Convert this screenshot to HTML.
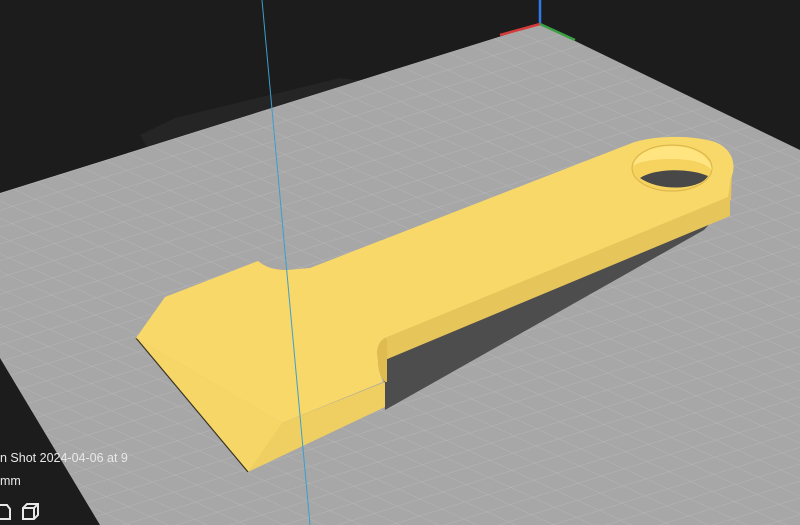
<!DOCTYPE html>
<html><head><meta charset="utf-8"><style>
html,body{margin:0;padding:0;background:#1c1c1c;width:800px;height:525px;overflow:hidden}
svg{display:block}
.t{font-family:"Liberation Sans",sans-serif;fill:#e8e8e8;font-size:12.5px}
</style></head><body>
<svg width="800" height="525" viewBox="0 0 800 525" xmlns="http://www.w3.org/2000/svg">
<defs>
<pattern id="g" patternUnits="userSpaceOnUse" width="24" height="24" patternTransform="matrix(0.909,0.416,-0.954,0.299,540,24)">
<rect width="24" height="24" fill="#a7a7a7"/>
<path d="M0 0H24M0 0V24" stroke="#bbbbbb" stroke-width="1.1" fill="none"/>
</pattern>
</defs>
<rect width="800" height="525" fill="#1c1c1c"/>
<polygon points="140,135 175,118 340,78 372,82 372,92 150,152" fill="#252525"/>
<polygon points="540,24 800,150 800,525 100,525 0,358 0,193" fill="url(#g)"/>
<!-- shadow -->
<polygon points="383,355 385,410 704,230 726,206" fill="#4d4d4d"/>
<!-- handle side -->
<polygon points="385,338 724,197 730,200 730,216 385,360" fill="#e6c55b"/>
<path d="M722,170 L732,170 L731,200 L722,205 Z" fill="#e8c45a"/>
<!-- head bevel / side -->
<polygon points="136,338 248,472 385,407 385,382 282,423" fill="#f0cf62"/>
<polygon points="136,338 248,472 282,423" fill="#f6d666"/>
<line x1="136" y1="338" x2="248" y2="472" stroke="#3a3326" stroke-width="1.2"/>
<!-- top face -->
<path d="M136,338 L165,297 L258,261 C264,266 272,270 287,270 L310,268 L632,143 C650,136 690,134 715,142 C735,150 736,168 731,178 L728,197 L385,338 C378,342 376,350 378,360 C378,372 382,378 383,382 L282,423 Z" fill="#f8d868"/>
<path d="M385,338 C378,342 376,350 378,360 C378,372 382,378 385,382 L387,382 L387,340 Z" fill="#e0bb50"/>
<!-- hole -->
<ellipse cx="672" cy="168" rx="40" ry="23" fill="#f5d35e" stroke="#d9b44a" stroke-width="1"/>
<path d="M640,178 C655,168 690,168 708,176 C700,190 660,192 640,178 Z" fill="#484848"/>
<path d="M633,166 C636,154 652,146 672,146 C694,146 710,156 712,170 C704,162 690,159 672,159 C652,159 638,162 633,166 Z" fill="#ffe480"/>
<!-- axes -->
<line x1="540" y1="0" x2="540" y2="24" stroke="#2f7ae6" stroke-width="2.5"/>
<line x1="540" y1="24" x2="500" y2="35" stroke="#d63b3b" stroke-width="2.5"/>
<line x1="540" y1="24" x2="575" y2="40" stroke="#3aa043" stroke-width="2.5"/>
<line x1="262" y1="0" x2="310" y2="525" stroke="#3a9fd0" stroke-width="1"/>
<text class="t" x="0" y="462">n Shot 2024-04-06 at 9</text>
<text class="t" x="0" y="485">mm</text>
<path d="M-2,505 H7 L10,509 V519 H-2" fill="none" stroke="#e8e8e8" stroke-width="2"/>
<path d="M23,508 L27,504 H38 V515 L34,519 H23 Z M23,508 H34 V519 M34,508 L38,504" fill="none" stroke="#e8e8e8" stroke-width="2"/>
</svg>
</body></html>
